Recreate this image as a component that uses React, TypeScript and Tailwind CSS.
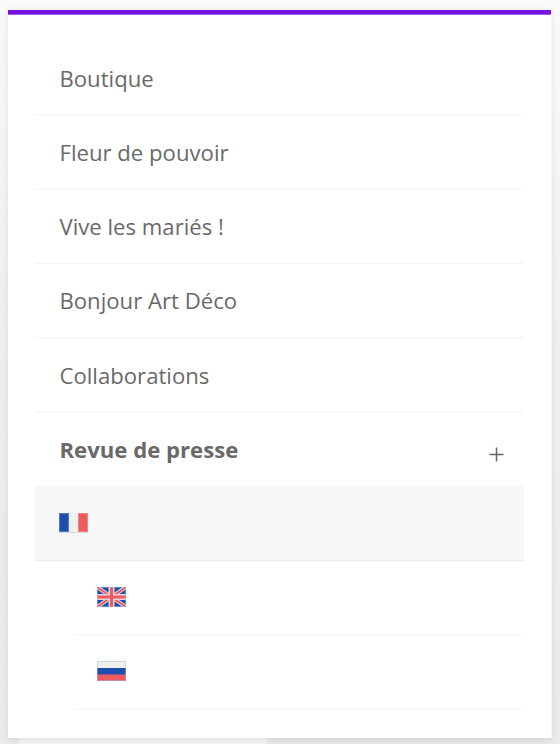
import type { ReactNode } from "react";

const LINKS = [
  "Boutique",
  "Fleur de pouvoir",
  "Vive les mariés !",
  "Bonjour Art Déco",
  "Collaborations",
];

function FlagFrame({ children }: { children: ReactNode }) {
  return (
    <svg width="29" height="20" viewBox="0 0 29 20" className="block">
      {children}
    </svg>
  );
}

function FlagOutline() {
  return <rect x="0.5" y="0.5" width="28" height="19" fill="none" stroke="#a5bbd8" strokeOpacity="0.5" />;
}

function FrenchFlag() {
  return (
    <FlagFrame>
      <path fill="#1f4fae" d="M0 0h10v20H0z" />
      <path fill="#f0f0f0" d="M10 0h9v20h-9z" />
      <path fill="#ef5a5e" d="M19 0h10v20H19z" />
      <path fill="none" stroke="#fff" strokeOpacity="0.25" d="M.5.5h9v18H.5zM19.5.5h9v18h-9z" />
      <path fill="#d5d8de" d="M0 19h29v1H0z" />
    </FlagFrame>
  );
}

function BritishFlag() {
  return (
    <FlagFrame>
      <path fill="#1f4fae" d="M0 0h29v20H0z" />
      <path stroke="#e6e8f0" strokeWidth="3.8" d="M0 0l29 20M29 0L0 20" />
      <path stroke="#ef5a5e" strokeWidth="2" d="M0 0l29 20M29 0L0 20" />
      <path fill="#e6d4dc" d="M11.5 0h6v20h-6zM0 7h29v6H0z" />
      <path fill="#ef5a5e" d="M13 0h3v20h-3zM0 8.5h29v3H0z" />
      <FlagOutline />
    </FlagFrame>
  );
}

function RussianFlag() {
  return (
    <FlagFrame>
      <path fill="#f0f0f0" d="M0 0h29v7H0z" />
      <path fill="#1f4fae" d="M0 7h29v6H0z" />
      <path fill="#ef5a5e" d="M0 13h29v7H0z" />
      <path fill="#8a5288" d="M0 13h29v1H0z" />
      <FlagOutline />
    </FlagFrame>
  );
}

export default function App() {
  return (
    <main className="flex h-[744px] w-[560px] flex-col overflow-hidden bg-linear-to-b from-[#fafafa] via-[#efefef] to-[#ebebeb] px-2 pt-[10px] font-['Open_Sans','Noto_Sans',sans-serif]">
      <nav className="relative h-[728px] w-[543px] shrink-0 border-t-4 border-[#7412df] bg-white px-[27px] shadow-[1px_0_0_#f4f4f4,0_2px_8px_rgba(0,0,0,0.1)]">
        <div className="-mx-[27px] h-px bg-[#a45be9]" />
        <ul className="w-[489px] pt-[26.8px] text-[22.15px] leading-[30px] text-[#696969]">
          {LINKS.map((label) => (
            <li
              key={label}
              className="flex h-[74.2px] items-center border-b-2 border-[#f8f8f8] px-[24.5px]"
            >
              <a>{label}</a>
            </li>
          ))}
          <li className="flex h-[73.2px] items-center justify-between pr-5 pl-[24.5px] font-bold">
            <a>Revue de presse</a>
            <svg width="15" height="15" viewBox="0 0 15 15" className="mt-[10px] block">
              <path d="M7.5 .5v14M.5 7.5h14" fill="none" stroke="#666" strokeWidth="1.5" />
            </svg>
          </li>
          <li className="flex h-[75px] items-center border-b border-[#eee] bg-[#f7f7f7] pl-6">
            <FrenchFlag />
          </li>
        </ul>
        <ul className="ml-[39px] w-[450px]">
          <li className="flex h-[75px] items-center border-b-2 border-[#f8f8f8] pb-px pl-[23px]">
            <BritishFlag />
          </li>
          <li className="flex h-[74px] items-center border-b-2 border-[#f8f8f8] pb-0.5 pl-[23px]">
            <RussianFlag />
          </li>
        </ul>
      </nav>
      {/* top edge of the page card behind the menu */}
      <div className="ml-[11px] h-[6px] w-[248px] bg-[#f7f7f7]" />
    </main>
  );
}
